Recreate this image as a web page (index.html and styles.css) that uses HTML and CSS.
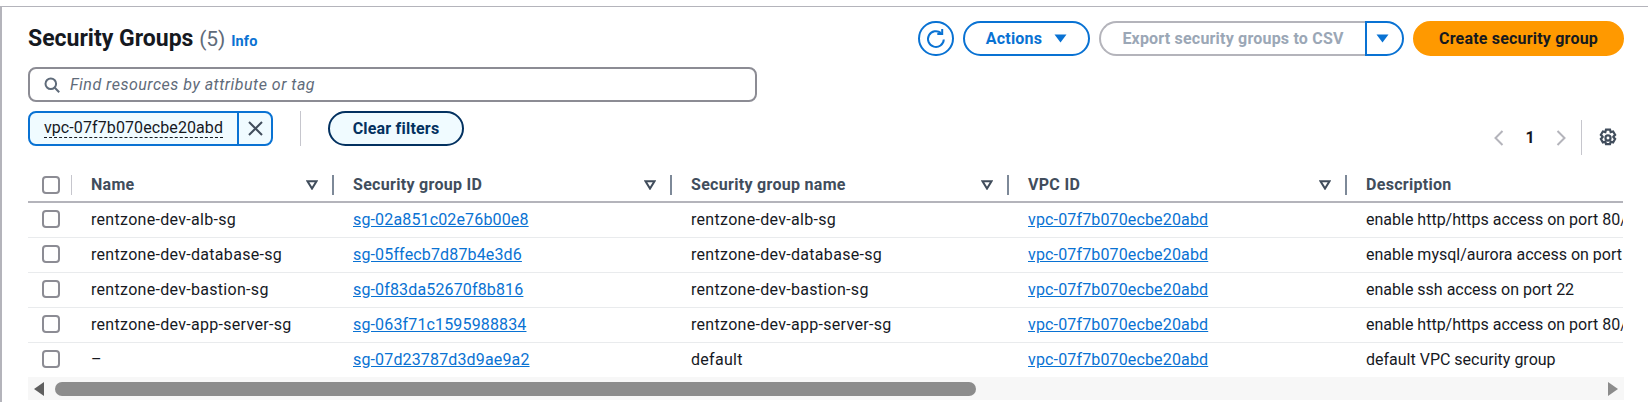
FILE: index.html
```html
<!doctype html>
<html lang="en">
<head>
	<meta charset="utf-8">
	<title>Security Groups</title>
	<link rel="stylesheet" href="styles.css">
</head>
<body>
<div class="panel">
	<div class="top-row">
		<h1 class="title">Security Groups <span class="count">(5)</span> <a class="info" href="#">Info</a></h1>
		<div class="actions">
			<button class="btn btn-icon">
				<svg width="22" height="22" viewBox="0 0 22 22" fill="none" stroke="#0972d3" stroke-width="2"><path d="M18.8 11.5a7.9 7.9 0 1 1-2.7-6.4"/><path d="M17.2 1v4.9h-4.9"/></svg>
			</button>
			<button class="btn btn-actions">Actions <svg class="caret" width="13" height="9" viewBox="0 0 13 9"><path d="M0.5 0.5h12L6.5 8.5z" fill="#0972d3"/></svg></button>
			<div class="split">
				<button class="btn btn-export" disabled>Export security groups to CSV</button>
				<button class="btn btn-drop"><svg width="13" height="9" viewBox="0 0 13 9"><path d="M0.5 0.5h12L6.5 8.5z" fill="#0972d3"/></svg></button>
			</div>
			<button class="btn btn-create">Create security group</button>
		</div>
	</div>

	<div class="search">
		<svg width="16" height="16" viewBox="0 0 16 16" fill="none" stroke="#5f6b7a" stroke-width="2"><circle cx="6.8" cy="6.8" r="5.3"/><path d="M10.8 10.8l4.4 4.4"/></svg>
		<span class="search-text">Find resources by attribute or tag</span>
	</div>

	<div class="filter-row">
		<div class="chip">
			<span class="chip-text"><span class="chip-label">vpc-07f7b070ecbe20abd</span></span>
			<span class="chip-close"><svg width="17" height="17" viewBox="0 0 17 17" fill="none" stroke="#414d5c" stroke-width="2"><path d="M2 2l13 13M15 2L2 15"/></svg></span>
		</div>
		<span class="filter-sep"></span>
		<button class="btn btn-clear">Clear filters</button>
		<div class="pager">
			<svg width="10" height="16" viewBox="0 0 10 16" fill="none" stroke="#b4b4bb" stroke-width="2"><path d="M8.5 1L1.5 8l7 7"/></svg>
			<span class="page-num">1</span>
			<svg width="10" height="16" viewBox="0 0 10 16" fill="none" stroke="#b4b4bb" stroke-width="2"><path d="M1.5 1l7 7-7 7"/></svg>
			<span class="pager-sep"></span>
			<svg class="gear" width="20" height="20" viewBox="0 0 18 18" fill="none" stroke="#414d5c" stroke-width="2"><path d="M7.2 1.5h3.6l.6 2.2 2.2-.6 1.8 3-1.6 1.7v.4l1.6 1.7-1.8 3-2.2-.6-.6 2.2H7.2l-.6-2.2-2.2.6-1.8-3 1.6-1.7v-.4L2.6 6.1l1.8-3 2.2.6z"/><circle cx="9" cy="9" r="2.3"/></svg>
		</div>
	</div>

	<div class="table-wrap">
		<table class="sg-table">
			<thead>
				<tr>
					<th class="col-check"><div class="th-check"><span class="checkbox"></span></div></th>
					<th class="col-name"><div class="th-inner">Name <svg class="sort" width="12" height="10" viewBox="0 0 12 10"><path d="M1.5 1.2h9L6 8.6z" fill="none" stroke="#414d5c" stroke-width="2"/></svg></div></th>
					<th class="col-id"><div class="th-inner">Security group ID <svg class="sort" width="12" height="10" viewBox="0 0 12 10"><path d="M1.5 1.2h9L6 8.6z" fill="none" stroke="#414d5c" stroke-width="2"/></svg></div></th>
					<th class="col-group"><div class="th-inner">Security group name <svg class="sort" width="12" height="10" viewBox="0 0 12 10"><path d="M1.5 1.2h9L6 8.6z" fill="none" stroke="#414d5c" stroke-width="2"/></svg></div></th>
					<th class="col-vpc"><div class="th-inner">VPC ID <svg class="sort" width="12" height="10" viewBox="0 0 12 10"><path d="M1.5 1.2h9L6 8.6z" fill="none" stroke="#414d5c" stroke-width="2"/></svg></div></th>
					<th class="col-desc"><div class="th-inner th-last">Description</div></th>
				</tr>
			</thead>
			<tbody>
				<tr>
					<td class="cell-check"><span class="checkbox"></span></td>
					<td>rentzone-dev-alb-sg</td>
					<td><a href="#">sg-02a851c02e76b00e8</a></td>
					<td>rentzone-dev-alb-sg</td>
					<td><a href="#">vpc-07f7b070ecbe20abd</a></td>
					<td class="cell-desc">enable http/https access on port 80/443</td>
				</tr>
				<tr>
					<td class="cell-check"><span class="checkbox"></span></td>
					<td>rentzone-dev-database-sg</td>
					<td><a href="#">sg-05ffecb7d87b4e3d6</a></td>
					<td>rentzone-dev-database-sg</td>
					<td><a href="#">vpc-07f7b070ecbe20abd</a></td>
					<td class="cell-desc">enable mysql/aurora access on port 3306</td>
				</tr>
				<tr>
					<td class="cell-check"><span class="checkbox"></span></td>
					<td>rentzone-dev-bastion-sg</td>
					<td><a href="#">sg-0f83da52670f8b816</a></td>
					<td>rentzone-dev-bastion-sg</td>
					<td><a href="#">vpc-07f7b070ecbe20abd</a></td>
					<td class="cell-desc">enable ssh access on port 22</td>
				</tr>
				<tr>
					<td class="cell-check"><span class="checkbox"></span></td>
					<td>rentzone-dev-app-server-sg</td>
					<td><a href="#">sg-063f71c1595988834</a></td>
					<td>rentzone-dev-app-server-sg</td>
					<td><a href="#">vpc-07f7b070ecbe20abd</a></td>
					<td class="cell-desc">enable http/https access on port 80/443</td>
				</tr>
				<tr>
					<td class="cell-check"><span class="checkbox"></span></td>
					<td>–</td>
					<td><a href="#">sg-07d23787d3d9ae9a2</a></td>
					<td>default</td>
					<td><a href="#">vpc-07f7b070ecbe20abd</a></td>
					<td class="cell-desc">default VPC security group</td>
				</tr>
			</tbody>
		</table>
	</div>

	<div class="scrollbar">
		<svg width="10" height="14" viewBox="0 0 10 14"><path d="M10 0v14L0 7z" fill="#5f5f5f"/></svg>
		<div class="scroll-track"><div class="scroll-thumb"></div></div>
		<svg width="10" height="14" viewBox="0 0 10 14"><path d="M0 0v14l10-7z" fill="#8c8c8c"/></svg>
	</div>
</div>
</body>
</html>
```

FILE: styles.css
```css
html, body {
	margin: 0;
	padding: 0;
	background: #fff;
}
body {
	padding-top: 6px;
	height: 396px;
	overflow: hidden;
	font-family: Roboto, sans-serif;
	font-size: 16px;
	color: #16191f;
}
a {
	color: #0972d3;
	letter-spacing: .15px;
}

.panel {
	border-top: 1px solid #b4b4bb;
	border-left: 2px solid #b4b4bb;
	padding: 14px 24px 0 26px;
	height: 382px;
}

.top-row {
	display: flex;
	justify-content: space-between;
	height: 35px;
}
.title {
	margin: 0;
	font-size: 23px;
	font-weight: 700;
	line-height: 30px;
	padding-top: 3px;
}
.count {
	font-size: 21px;
	font-weight: 400;
	color: #5f6b7a;
}
.info {
	font-size: 14.5px;
	text-decoration: none;
}

.actions {
	display: flex;
	gap: 9px;
}
.btn {
	box-sizing: border-box;
	height: 35px;
	border-radius: 18px;
	border: 2px solid #0972d3;
	background: #fff;
	font-family: inherit;
	font-size: 16px;
	font-weight: 700;
	letter-spacing: .2px;
	color: #0972d3;
	padding: 0;
	display: flex;
	align-items: center;
	justify-content: center;
}
.btn-icon {
	width: 36px;
}
.btn-actions {
	width: 127px;
	gap: 12px;
}
.split {
	display: flex;
}
.btn-export {
	width: 266px;
	border-color: #b4b4bb;
	border-right: 0;
	border-radius: 18px 0 0 18px;
	color: #9ba7b6;
}
.btn-drop {
	width: 39px;
	border-radius: 0 18px 18px 0;
	padding-right: 4px;
}
.btn-create {
	width: 211px;
	background: #ff9900;
	border-color: #ff9900;
	color: #16191f;
}

.search {
	box-sizing: border-box;
	display: flex;
	align-items: center;
	gap: 10px;
	width: 729px;
	height: 35px;
	margin-top: 11px;
	padding-left: 14px;
	border: 2px solid #8c8c94;
	border-radius: 8px;
}
.search-text {
	font-style: italic;
	letter-spacing: .5px;
	color: #5f6b7a;
}

.filter-row {
	display: flex;
	height: 44px;
	margin-top: 9px;
}
.chip {
	box-sizing: border-box;
	display: flex;
	width: 245px;
	height: 35px;
	border: 2px solid #0972d3;
	border-radius: 8px;
	background: #f0fbff;
}
.chip-text {
	display: flex;
	align-items: center;
	justify-content: center;
	flex: 1;
	border-right: 2px solid #0972d3;
	letter-spacing: .1px;
}
.chip-label {
	border-bottom: 1px dashed #16191f;
	line-height: 18px;
}
.chip-close {
	display: flex;
	align-items: center;
	justify-content: center;
	width: 32px;
}
.filter-sep {
	width: 1px;
	height: 35px;
	margin: 0 27px;
	background: #c6c6cd;
}
.btn-clear {
	width: 136px;
	border-color: #033160;
	background: #f0fbff;
	color: #033160;
}

.pager {
	display: flex;
	align-items: center;
	height: 35px;
	margin: 9px 0 0 auto;
}
.page-num {
	width: 52px;
	text-align: center;
	font-weight: 700;
}
.pager-sep {
	width: 1px;
	height: 35px;
	margin: 0 16px 0 15px;
	background: #c6c6cd;
}
.gear {
	margin-right: 6px;
}

.table-wrap {
	overflow: hidden;
	margin-top: 11px;
}
.sg-table {
	table-layout: fixed;
	width: 1595px;
	border-collapse: collapse;
}
.col-check { width: 44px; }
.col-name { width: 262px; }
.col-id { width: 338px; }
.col-group { width: 337px; }
.col-vpc { width: 338px; }
.col-desc { width: 276px; }

.sg-table th {
	height: 33px;
	padding: 2px 0 0;
	border-bottom: 2px solid #b4b4bb;
	text-align: left;
	font-weight: 700;
	letter-spacing: .3px;
	color: #414d5c;
}
.th-check {
	display: flex;
	align-items: center;
	height: 20px;
	padding-left: 14px;
	border-right: 1px solid #c6c6cd;
}
.th-inner {
	display: flex;
	align-items: center;
	justify-content: space-between;
	height: 20px;
	padding: 0 14px 0 19px;
	border-right: 2px solid #7d8998;
}
.th-last {
	border-right: 0;
}
.sg-table td {
	height: 32px;
	padding: 0 0 2px 19px;
	border-bottom: 1px solid #e9ebed;
	white-space: nowrap;
	overflow: hidden;
	letter-spacing: .3px;
}
.sg-table tr:last-child td {
	border-bottom: 0;
}
.sg-table td.cell-check {
	padding-left: 14px;
}
.sg-table td.cell-desc {
	letter-spacing: 0;
}
.checkbox {
	box-sizing: border-box;
	display: block;
	width: 18px;
	height: 18px;
	border: 2px solid #8c8c94;
	border-radius: 4px;
	background: #fff;
}

.scrollbar {
	display: flex;
	align-items: center;
	height: 23px;
	padding: 0 6px;
	gap: 11px;
	background: #f7f7f7;
}
.scroll-track {
	flex: 1;
}
.scroll-thumb {
	width: 921px;
	height: 14px;
	border-radius: 7px;
	background: #8c8c8c;
}
```
